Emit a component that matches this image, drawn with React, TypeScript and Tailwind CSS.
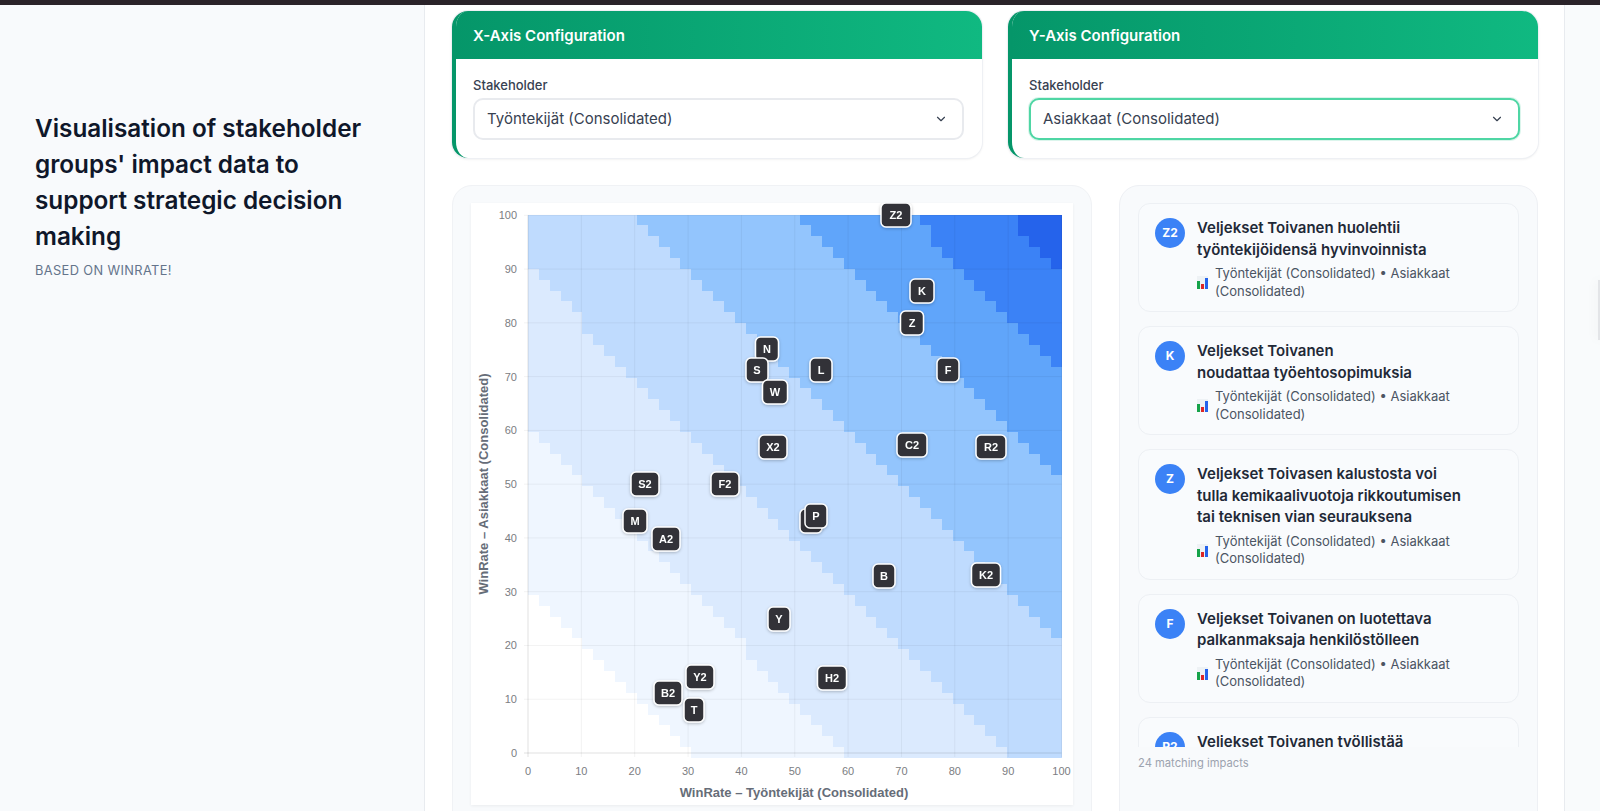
import { ChevronDown } from "lucide-react";

const COLS = Array.from({ length: 49 }, (_, i) => i);
const ROWS = Array.from({ length: 50 }, (_, i) => i);
const TICKS = [0, 10, 20, 30, 40, 50, 60, 70, 80, 90, 100];

// chart box starts at 471,203 in the page
const PX = (v: number) => 57 + v * 5.335;
const PY = (v: number) => 550 - v * 5.377;
const CELL_W = 10.888;
const CELL_H = 10.87;

function bandColor(sum: number) {
  if (sum <= 30) return "#ffffff";
  if (sum <= 60) return "#eff6ff";
  if (sum <= 90) return "#dbeafe";
  if (sum <= 120.6) return "#bfdbfe";
  if (sum <= 151.5) return "#93c5fd";
  if (sum <= 173) return "#60a5fa";
  if (sum <= 191.7) return "#3b82f6";
  return "#2563eb";
}

const MARKERS: { id: string; x: number; y: number; w: number }[] = [
  { id: "Z2", x: 896, y: 215, w: 30 },
  { id: "K", x: 922, y: 291, w: 24 },
  { id: "Z", x: 912, y: 323, w: 23 },
  { id: "L", x: 821, y: 370, w: 22 },
  { id: "F", x: 948, y: 370, w: 22 },
  { id: "C2", x: 912, y: 445, w: 30 },
  { id: "R2", x: 991, y: 447, w: 30 },
  { id: "N", x: 767, y: 349, w: 23 },
  { id: "S", x: 757, y: 370, w: 22 },
  { id: "W", x: 775, y: 392, w: 25 },
  { id: "X2", x: 773, y: 447, w: 28 },
  { id: "S2", x: 645, y: 484, w: 28 },
  { id: "F2", x: 725, y: 484, w: 28 },
  { id: "M", x: 635, y: 521, w: 24 },
  { id: "A2", x: 666, y: 539, w: 28 },
  { id: "Y", x: 779, y: 619, w: 22 },
  { id: "Y2", x: 700, y: 677, w: 28 },
  { id: "B2", x: 668, y: 693, w: 28 },
  { id: "T", x: 694, y: 710, w: 20 },
  { id: "H2", x: 832, y: 678, w: 29 },
  { id: "B", x: 884, y: 576, w: 22 },
  { id: "K2", x: 986, y: 575, w: 29 },
  { id: "", x: 811, y: 521, w: 22 },
  { id: "P", x: 816, y: 516, w: 22 },
];

const IMPACTS = [
  { id: "Z2", title: "Veljekset Toivanen huolehtii työntekijöidensä hyvinvoinnista" },
  { id: "K", title: "Veljekset Toivanen noudattaa\u00a0työehtosopimuksia" },
  { id: "Z", title: "Veljekset Toivasen kalustosta voi tulla kemikaalivuotoja rikkoutumisen tai teknisen vian seurauksena" },
  { id: "F", title: "Veljekset Toivanen on luotettava palkanmaksaja henkilöstölleen" },
  { id: "P2", title: "Veljekset Toivanen työllistää paikallisia osaajia" },
];

function ChartEmoji() {
  return (
    <svg width="11" height="13" viewBox="0 0 11 13" className="shrink-0">
      <rect x="0" y="0" width="11" height="13" fill="#eef2f5" />
      <rect x="0" y="5" width="3" height="8" fill="#16a34a" />
      <rect x="4" y="8" width="3" height="5" fill="#dc2626" />
      <rect x="8" y="2" width="3" height="11" fill="#2563eb" />
    </svg>
  );
}

function AxisCard({ title, value, focused }: { title: string; value: string; focused?: boolean }) {
  return (
    <div className="rounded-2xl overflow-hidden bg-white border-l-4 border-l-[#059669] shadow-[0_0_0_1px_#eef0f4,0_1px_3px_rgba(0,0,0,0.1)]">
      <div className="h-[48px] -ml-1 pl-[21px] pt-[2px] flex items-center bg-gradient-to-r from-[#059669] to-[#10b981] text-white text-[15px] font-semibold">
        {title}
      </div>
      <div className="pl-[17px] pr-[18px] pt-[18px] pb-[18px]">
        <div className="text-[13px] leading-[16px] font-medium text-[#374151] mb-[5px]">Stakeholder</div>
        <div
          className={`h-[42px] rounded-[10px] bg-white flex items-center justify-between pl-[12px] pr-[14px] text-[15px] text-[#374151] ${
            focused ? "border-2 border-[#4fd6a4] shadow-[0_0_0_1px_rgba(16,185,129,0.15)]" : "border-2 border-[#e8eaee]"
          }`}
        >
          <span>{value}</span>
          <ChevronDown size={14} strokeWidth={2} className="text-[#374151]" />
        </div>
      </div>
    </div>
  );
}

function Heatmap() {
  return (
    <svg width="602" height="602" viewBox="0 0 602 602" className="block" style={{ fontFamily: "'Liberation Sans', Arial, sans-serif" }}>
      <defs>
        <filter id="marker-shadow" x="-30%" y="-30%" width="160%" height="160%">
          <feDropShadow dx="0" dy="1" stdDeviation="1.5" floodColor="#000000" floodOpacity="0.25" />
        </filter>
      </defs>
      {COLS.map((c) =>
        ROWS.map((r) => {
          const sum = (c * 100) / 48 + (r * 100) / 49;
          const y = Math.max(PY(100), 555 - (r + 1) * CELL_H);
          return (
            <rect
              key={`${c}-${r}`}
              x={57 + c * CELL_W}
              y={y}
              width={CELL_W}
              height={555 - r * CELL_H - y}
              fill={bandColor(sum)}
              shapeRendering="crispEdges"
            />
          );
        })
      )}
      {TICKS.map((t) => (
        <g key={t}>
          <line x1={PX(t)} x2={PX(t)} y1={PY(100)} y2={PY(0) + 4} stroke="#000000" strokeOpacity={t === 0 ? 0.12 : 0.05} />
          <line x1={PX(0) - 4} x2={PX(100)} y1={PY(t)} y2={PY(t)} stroke="#000000" strokeOpacity={t === 0 ? 0.12 : 0.05} />
          <text x={PX(t)} y={572} fontSize="11" fill="#7b7d82" textAnchor="middle">
            {t}
          </text>
          <text x={46} y={PY(t) + 4} fontSize="11" fill="#7b7d82" textAnchor="end">
            {t}
          </text>
        </g>
      ))}
      <text x={323} y={594} fontSize="13" fontWeight="700" fill="#666d78" textAnchor="middle">
        WinRate – Työntekijät (Consolidated)
      </text>
      <text transform="translate(17 281) rotate(-90)" fontSize="13" fontWeight="700" fill="#666d78" textAnchor="middle">
        WinRate – Asiakkaat (Consolidated)
      </text>
      {MARKERS.map((m) => (
        <g key={`${m.id}-${m.x}`} filter="url(#marker-shadow)">
          <rect x={m.x - 471 - m.w / 2} y={m.y - 203 - 12} width={m.w} height={24} rx={5} fill="#303338" stroke="#ffffff" strokeWidth={1.5} />
          <text x={m.x - 471} y={m.y - 203 + 4} fontSize="11" fontWeight="700" fill="#ffffff" textAnchor="middle">
            {m.id}
          </text>
        </g>
      ))}
    </svg>
  );
}

export default function App() {
  return (
    <div className="h-screen overflow-hidden flex flex-col bg-white" style={{ fontFamily: "Inter, sans-serif" }}>
      <div className="h-[5px] shrink-0 bg-[#2a2329]" />
      <div className="flex flex-1 min-h-0">
        {/* Left intro column */}
        <aside className="w-[425px] shrink-0 bg-[#f8fafc] border-r border-[#e8ebef] pl-[35px] pr-[40px] pt-[105px]">
          <h1 className="text-[24.3px] leading-[36px] font-semibold text-[#0f172a]">
            Visualisation of stakeholder groups' impact data to support strategic decision making
          </h1>
          <p className="mt-[8px] text-[12.8px] leading-[18px] tracking-[0.03em] uppercase text-[#64748b]">Based on WinRate!</p>
        </aside>

        {/* Main column */}
        <main className="flex-1 min-w-0 pl-[27px] pr-[26px] pt-[6px]">
          <div className="grid grid-cols-2 gap-[26px]">
            <AxisCard title="X-Axis Configuration" value="Työntekijät (Consolidated)" />
            <AxisCard title="Y-Axis Configuration" value="Asiakkaat (Consolidated)" focused />
          </div>
          <div className="flex gap-[27px] mt-[27px]">
            <section className="w-[640px] shrink-0 h-[700px] rounded-[20px] bg-[#f8fafc] border border-[#f0f2f5] pl-[18px] pt-[17px]">
              <div className="w-[602px] bg-white shadow-[0_1px_3px_rgba(0,0,0,0.06)]">
                <Heatmap />
              </div>
            </section>
            <section className="flex-1 min-w-0 h-[700px] rounded-[20px] bg-[#f8fafc] border border-[#eef0f4] pl-[18px] pr-[18px] pt-[17px]">
              <div className="h-[544px] overflow-hidden flex flex-col gap-[14px]">
                {IMPACTS.map((item) => (
                  <div key={item.id} className="shrink-0 rounded-xl border border-[#edf0f4] bg-[#f9fbfd] pl-[16px] pr-[20px] pt-[13px] pb-[11px] flex gap-3">
                    <div className="w-[30px] h-[30px] mt-[1px] shrink-0 rounded-full bg-[#3b82f6] text-white text-[12px] font-bold flex items-center justify-center">
                      {item.id}
                    </div>
                    <div className="min-w-0 pr-[30px]">
                      <div className="text-[15px] leading-[21.5px] font-semibold text-[#1f2937]">{item.title}</div>
                      <div className="mt-[5px] flex items-center gap-[7px] text-[13px] leading-[17.5px] text-[#4b5563]">
                        <ChartEmoji />
                        <span>Työntekijät (Consolidated) • Asiakkaat (Consolidated)</span>
                      </div>
                    </div>
                  </div>
                ))}
              </div>
              <div className="mt-[8px] text-[11.2px] leading-[16px] text-[#9ca3af]">24 matching impacts</div>
            </section>
          </div>
        </main>

        {/* Right strip */}
        <div className="relative w-[36px] shrink-0 bg-[#f9fbfc] border-l border-[#e8ebef]">
          <div className="absolute right-0 top-[275px] w-[2px] h-[60px] bg-[#e3e5e8] shadow-[0_0_12px_rgba(0,0,0,0.12)]" />
        </div>
      </div>
    </div>
  );
}
